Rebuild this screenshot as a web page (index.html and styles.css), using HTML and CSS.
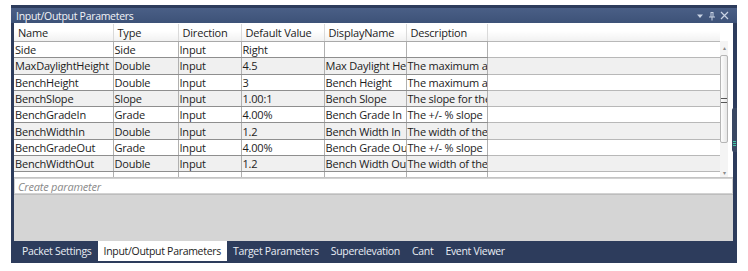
FILE: index.html
```html
<!DOCTYPE html>
<html lang="en">
<head>
  <meta charset="UTF-8">
  <title>Input/Output Parameters</title>
  <link rel="stylesheet" href="styles.css">
</head>
<body>
  <!-- Docked panel -->
  <div class="panel">
    <div class="titlebar">
      <span class="title">Input/Output Parameters</span>
      <div class="title-icons">
        <svg width="8" height="8" viewBox="0 0 8 8"><path d="M1 2.5h6L4 6z" fill="#c9d3e4"/></svg>
        <svg width="8" height="10" viewBox="0 0 8 10"><path d="M2.5 1h3v4.5h1.5v1h-2.5v3h-1v-3h-2.5v-1h1.5z M3.5 2v3.5h1V2z" fill="#c9d3e4"/></svg>
        <svg width="9" height="9" viewBox="0 0 9 9"><path d="M1 1l7 7M8 1l-7 7" stroke="#c9d3e4" stroke-width="1.2"/></svg>
      </div>
    </div>

    <div class="body">
      <div class="grid-area">
        <div class="grid">
          <table class="params">
            <colgroup>
              <col class="c-name">
              <col class="c-type">
              <col class="c-dir">
              <col class="c-def">
              <col class="c-disp">
              <col class="c-desc">
              <col>
            </colgroup>
            <thead>
              <tr>
                <th>Name</th>
                <th>Type</th>
                <th>Direction</th>
                <th>Default Value</th>
                <th>DisplayName</th>
                <th>Description</th>
                <th class="c-fill"></th>
              </tr>
            </thead>
            <tbody>
              <tr><td>Side</td><td>Side</td><td>Input</td><td>Right</td><td></td><td></td><td class="c-fill"></td></tr>
              <tr><td>MaxDaylightHeight</td><td>Double</td><td>Input</td><td>4.5</td><td>Max Daylight Height</td><td>The maximum allowed</td><td class="c-fill"></td></tr>
              <tr><td>BenchHeight</td><td>Double</td><td>Input</td><td>3</td><td>Bench Height</td><td>The maximum allowed</td><td class="c-fill"></td></tr>
              <tr><td>BenchSlope</td><td>Slope</td><td>Input</td><td>1.00:1</td><td>Bench Slope</td><td>The slope for the</td><td class="c-fill"></td></tr>
              <tr><td>BenchGradeIn</td><td>Grade</td><td>Input</td><td>4.00%</td><td>Bench Grade In</td><td>The +/- % slope</td><td class="c-fill"></td></tr>
              <tr><td>BenchWidthIn</td><td>Double</td><td>Input</td><td>1.2</td><td>Bench Width In</td><td>The width of the</td><td class="c-fill"></td></tr>
              <tr><td>BenchGradeOut</td><td>Grade</td><td>Input</td><td>4.00%</td><td>Bench Grade Out</td><td>The +/- % slope</td><td class="c-fill"></td></tr>
              <tr><td>BenchWidthOut</td><td>Double</td><td>Input</td><td>1.2</td><td>Bench Width Out</td><td>The width of the</td><td class="c-fill"></td></tr>
              <tr><td>DaylightSlope</td><td>Slope</td><td>Input</td><td>2.00:1</td><td>Daylight Slope</td><td>The slope for the</td><td class="c-fill"></td></tr>
            </tbody>
          </table>
        </div>
        <div class="vscroll">
          <div class="arrow">&#9652;</div>
          <div class="track">
            <div class="thumb"><span class="grip"></span></div>
          </div>
          <div class="arrow">&#9662;</div>
        </div>
      </div>

      <div class="create">
        <input type="text" placeholder="Create parameter">
      </div>
      <div class="empty"></div>

      <!-- splitter grip on the right edge -->
      <div class="splitter">
        <span></span><span></span><span></span>
      </div>
    </div>

    <div class="tabs">
      <span class="tab">Packet Settings</span>
      <span class="tab active">Input/Output Parameters</span>
      <span class="tab">Target Parameters</span>
      <span class="tab">Superelevation</span>
      <span class="tab">Cant</span>
      <span class="tab">Event Viewer</span>
    </div>
  </div>
</body>
</html>
```

FILE: styles.css
```css
body {
  margin: 0;
  background: #fff;
  font-family: 'Open Sans', 'Noto Sans', sans-serif;
  font-size: 11px;
  color: #1c1c1c;
}

.panel {
  margin: 5px 0 0 11px;
  width: 726px;
  height: 258px;
  background: #2d3c5c;
  display: flex;
  flex-direction: column;
  box-sizing: border-box;
  padding: 0 4px 0 3px;
}

/* Title bar */
.titlebar {
  height: 15px;
  margin: 3px -4px 0 -3px;
  padding: 0 8px 0 5px;
  background: linear-gradient(#4a5f86, #3d5278);
  display: flex;
  justify-content: space-between;
  align-items: center;
  color: #f2f4f8;
}

.title {
  font-size: 10.5px;
  letter-spacing: -0.3px;
}

.title-icons {
  display: flex;
  align-items: center;
  gap: 4px;
}

/* Body */
.body {
  flex: 1;
  background: #fff;
  display: flex;
  flex-direction: column;
  position: relative;
}

.grid-area {
  display: flex;
  height: 153px;
  padding-top: 1px;
}

.grid {
  flex: 1;
  overflow: hidden;
}

.params {
  border-collapse: collapse;
  table-layout: fixed;
  width: 100%;
  letter-spacing: -0.2px;
}

.params th {
  height: 17px;
  padding: 0 0 0 4px;
  font-weight: normal;
  text-align: left;
  background: linear-gradient(#ffffff 40%, #f1f1f1);
  border-right: 1px solid #dadada;
  border-bottom: 1px solid #a9a9a9;
  white-space: nowrap;
  overflow: hidden;
}

.params td {
  height: 15.3px;
  padding: 0 0 0 1px;
  border-right: 1px solid #b0b0b0;
  border-bottom: 1px solid #8e8e8e;
  white-space: nowrap;
  overflow: hidden;
  line-height: 15px;
}

.params tbody tr:nth-child(even) td {
  background: #f0f0f0;
}

.params .c-fill {
  border-right: none;
  border-bottom-color: #b8b8b8;
}

.params td.c-fill {
  background: #fff;
}

.c-name { width: 99px; }
.c-type { width: 65px; }
.c-dir  { width: 63px; }
.c-def  { width: 83px; }
.c-disp { width: 82px; }
.c-desc { width: 81px; }

/* Vertical scrollbar */
.vscroll {
  width: 8px;
  margin: 17px 5px 0 0;
  background: #f4f4f4;
  display: flex;
  flex-direction: column;
}

.arrow {
  height: 14px;
  font-size: 6px;
  color: #8a8a8a;
  text-align: center;
  line-height: 14px;
}

.track {
  flex: 1;
  padding-bottom: 23px;
}

.thumb {
  height: 88px;
  box-sizing: border-box;
  border: 1px solid #b5b5b5;
  border-radius: 2px;
  background: linear-gradient(90deg, #fdfdfd, #e6e6e6);
  display: flex;
  justify-content: center;
  padding-top: 42px;
}

.grip {
  width: 6px;
  height: 5px;
  border-top: 1px solid #555;
  border-bottom: 1px solid #555;
  box-sizing: border-box;
}

/* Create row */
.create {
  height: 16px;
  border-top: 1px solid #c4c4c4;
}

.create input {
  width: 100%;
  height: 16px;
  box-sizing: border-box;
  border: 1px solid #d2d2d2;
  padding: 0 3px;
  font-family: 'Open Sans', 'Noto Sans', sans-serif;
  font-size: 11px;
  font-style: italic;
  letter-spacing: -0.2px;
}

.create input::placeholder {
  color: #8a8a8a;
}

.empty {
  flex: 1;
  background: #d5d5d5;
  border-top: 1px solid #bdbdbd;
}

.splitter {
  position: absolute;
  top: 85px;
  right: -4px;
  width: 5px;
  height: 44px;
  background: #3a4863;
  display: flex;
  flex-direction: column;
  justify-content: flex-end;
  gap: 1px;
  padding-bottom: 6px;
  box-sizing: border-box;
  border-radius: 2px 0 0 2px;
}

.splitter span {
  height: 1px;
  margin: 0 1px;
  background: #3fc9a4;
}

/* Bottom tabs */
.tabs {
  height: 20px;
  margin: 0 -4px 0 -3px;
  padding: 0 0 2px 5px;
  display: flex;
  align-items: stretch;
}

.tab {
  color: #e9edf4;
  padding: 0 6px;
  display: flex;
  align-items: center;
  font-size: 10.5px;
  letter-spacing: -0.3px;
}

.tab.active {
  background: #fff;
  color: #1c1c1c;
}
```
